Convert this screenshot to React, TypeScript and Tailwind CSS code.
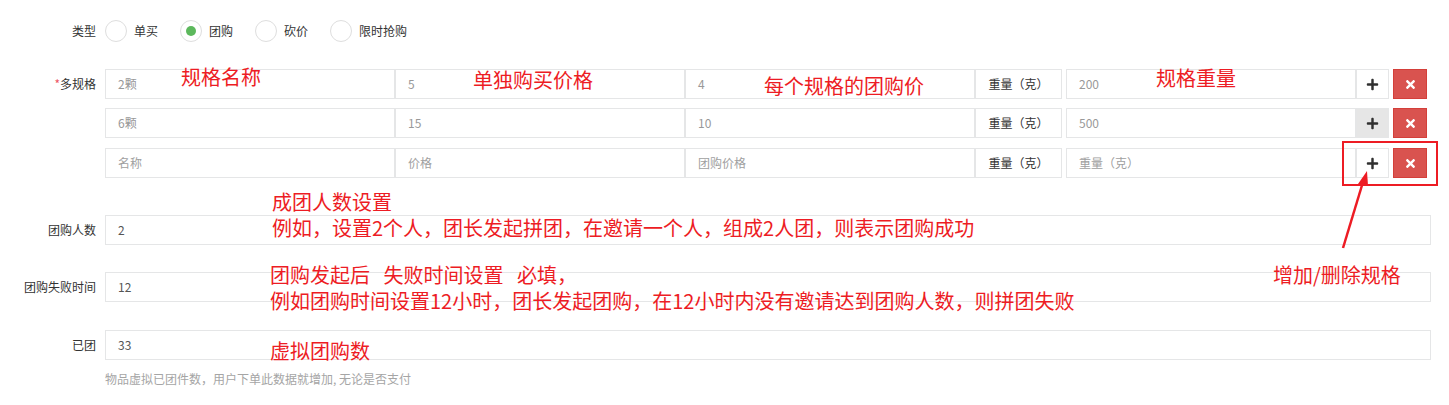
import { FaPlus, FaTimes } from 'react-icons/fa';

const font = { fontFamily: '"Noto Sans CJK SC", "Noto Sans", sans-serif' };

const specRows = [
  { name: '2颗', price: '5', group: '4', weight: '200', active: false, mb: 'mb-[9px]' },
  { name: '6颗', price: '15', group: '10', weight: '500', active: true, mb: 'mb-[10px]' },
  { name: '', price: '', group: '', weight: '', active: false, mb: '' },
];

function Label({ children }: { children: React.ReactNode }) {
  return (
    <div className="w-[105px] shrink-0 pr-[9px] text-right text-[12px] text-[#333]">{children}</div>
  );
}

function Field({ w, value, placeholder }: { w: string; value: string; placeholder: string }) {
  return (
    <div className={`${w} h-[30px] shrink-0 border border-[#e5e6e7] bg-white flex items-center pl-[12px] text-[12px]`}>
      {value ? <span className="text-[#999]">{value}</span> : <span className="text-[#a0a0a0]">{placeholder}</span>}
    </div>
  );
}

function Radio({ label, checked }: { label: string; checked?: boolean }) {
  return (
    <div className="flex items-center gap-[7px]">
      <div className="w-[22px] h-[22px] rounded-full border border-[#dedede] bg-white flex items-center justify-center">
        {checked && <div className="w-[10px] h-[10px] rounded-full bg-[#5cb85c]" />}
      </div>
      <span className="text-[12px] text-[#333]">{label}</span>
    </div>
  );
}

function SingleRow({ label, value, mt }: { label: string; value: string; mt: string }) {
  return (
    <div className={`flex items-center ${mt}`}>
      <Label>{label}</Label>
      <div className="w-[1326px] h-[30px] border border-[#e5e6e7] flex items-center pl-[12px] text-[12px] text-[#555]">
        {value}
      </div>
    </div>
  );
}

export default function App() {
  return (
    <div className="relative w-[1449px] h-[405px] bg-white overflow-hidden" style={font}>
      {/* type radios */}
      <div className="flex items-center pt-[20px]">
        <Label>类型</Label>
        <div className="flex items-center gap-[22px]">
          <Radio label="单买" />
          <Radio label="团购" checked />
          <Radio label="砍价" />
          <Radio label="限时抢购" />
        </div>
      </div>

      {/* spec rows */}
      <div className="mt-[27px]">
        {specRows.map((r, i) => (
          <div key={i} className={`flex items-center ${r.mb}`}>
            <Label>
              {i === 0 && (
                <>
                  <span className="text-[#ed5565]">*</span>多规格
                </>
              )}
            </Label>
            <div className="flex items-center">
              <Field w="w-[290px]" value={r.name} placeholder="名称" />
              <Field w="w-[290px]" value={r.price} placeholder="价格" />
              <Field w="w-[290px]" value={r.group} placeholder="团购价格" />
              <div className="w-[87px] h-[30px] shrink-0 border border-[#e5e6e7] flex items-center justify-center text-[12px] text-[#333]">
                重量（克）
              </div>
              <div className="ml-[4px]">
                <Field w="w-[290px]" value={r.weight} placeholder="重量（克）" />
              </div>
              <button
                className={`w-[33px] h-[30px] border border-[#e5e6e7] flex items-center justify-center text-[#2f2f2f] ${r.active ? 'bg-[#e6e6e6]' : 'bg-white'}`}
              >
                <FaPlus size={13} />
              </button>
              <button className="ml-[4px] w-[34px] h-[30px] bg-[#d9534f] border border-[#d43f3a] flex items-center justify-center text-white">
                <FaTimes size={13} />
              </button>
            </div>
          </div>
        ))}
      </div>

      <SingleRow label="团购人数" value="2" mt="mt-[37px]" />
      <SingleRow label="团购失败时间" value="12" mt="mt-[27px]" />
      <SingleRow label="已团" value="33" mt="mt-[28px]" />
      <div className="pl-[105px] mt-[10px] text-[12px] text-[#a5a5a5]">
        物品虚拟已团件数，用户下单此数据就增加, 无论是否支付
      </div>

      {/* annotations */}
      <div className="absolute inset-0 pointer-events-none text-[20px] leading-[26px] text-[#ed1c24]">
        <div className="absolute left-[181px] top-[64px]">规格名称</div>
        <div className="absolute left-[473px] top-[67px]">单独购买价格</div>
        <div className="absolute left-[764px] top-[73px]">每个规格的团购价</div>
        <div className="absolute left-[1156px] top-[65px]">规格重量</div>
        <div className="absolute left-[272px] top-[189px]">
          <div>成团人数设置</div>
          <div>例如，设置2个人，团长发起拼团，在邀请一个人，组成2人团，则表示团购成功</div>
        </div>
        <div className="absolute left-[270px] top-[262px] whitespace-pre">
          <div>团购发起后&nbsp;&nbsp;&nbsp;失败时间设置&nbsp;&nbsp;&nbsp;必填，</div>
          <div>例如团购时间设置12小时，团长发起团购，在12小时内没有邀请达到团购人数，则拼团失败</div>
        </div>
        <div className="absolute left-[270px] top-[338px]">虚拟团购数</div>
        <div className="absolute left-[1273px] top-[262px]">增加/删除规格</div>
        <div className="absolute left-[1342px] top-[141px] w-[96px] h-[45px] border-2 border-[#ed1c24]" />
        <svg className="absolute left-0 top-0" width="1449" height="405">
          <line x1="1343" y1="248" x2="1363" y2="182" stroke="#ed1c24" strokeWidth="2.5" />
          <polygon points="1367,171 1358,184 1368,186" fill="#ed1c24" />
        </svg>
      </div>
    </div>
  );
}
